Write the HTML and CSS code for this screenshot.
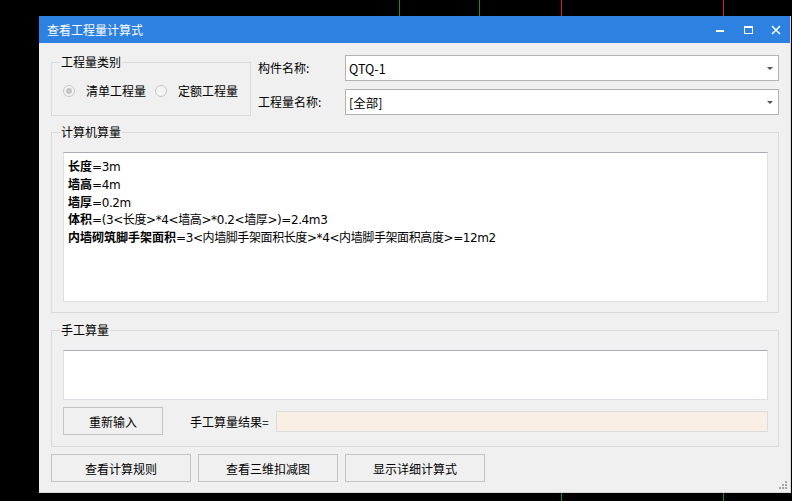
FILE: index.html
```html
<!DOCTYPE html>
<html lang="zh-CN">

<head>
    <meta charset="UTF-8">
    <meta name="viewport" content="width=device-width, initial-scale=1.0">
    <title>查看工程量计算式</title>
    <link rel="stylesheet" href="styles.css">
</head>

<body>
    <div class="desk-line green" style="left:399px; top:0; height:16px;"></div>
    <div class="desk-line green" style="left:479px; top:0; height:16px;"></div>
    <div class="desk-line red" style="left:561px; top:0; height:16px;"></div>
    <div class="desk-line red" style="left:723px; top:0; height:16px;"></div>
    <div class="desk-line green" style="left:561px; top:493px; height:8px;"></div>
    <div class="desk-line green" style="left:723px; top:493px; height:8px;"></div>

    <div class="window">
        <div class="titlebar">
            <span class="title">查看工程量计算式</span>
            <div class="title-buttons">
                <svg width="28" height="27" viewBox="0 0 28 27"><rect x="10" y="14" width="8" height="2" fill="#fff"/></svg>
                <svg width="28" height="27" viewBox="0 0 28 27"><rect x="10.5" y="10.5" width="8" height="7" fill="none" stroke="#fff"/><rect x="10" y="10" width="9" height="2" fill="#fff"/></svg>
                <svg width="28" height="27" viewBox="0 0 28 27"><path d="M10 10 L18 18 M18 10 L10 18" stroke="#fff" stroke-width="1.5"/></svg>
            </div>
        </div>

        <div class="content">
            <div class="top-row">
                <fieldset class="group kind-group">
                    <legend>工程量类别</legend>
                    <div class="radio-row">
                        <span class="radio checked"></span>
                        <span class="radio-label">清单工程量</span>
                        <span class="radio"></span>
                        <span class="radio-label">定额工程量</span>
                    </div>
                </fieldset>

                <div class="fields">
                    <label class="field-label">构件名称:</label>
                    <div class="combo"><span>QTQ-1</span><span class="arrow"></span></div>
                    <label class="field-label">工程量名称:</label>
                    <div class="combo"><span>[全部]</span><span class="arrow"></span></div>
                </div>
            </div>

            <fieldset class="group calc-group">
                <legend>计算机算量</legend>
                <div class="textbox formula">
                    <div class="line"><b>长度</b>=3m</div>
                    <div class="line"><b>墙高</b>=4m</div>
                    <div class="line"><b>墙厚</b>=0.2m</div>
                    <div class="line"><b>体积</b>=(3&lt;长度&gt;*4&lt;墙高&gt;*0.2&lt;墙厚&gt;)=2.4m3</div>
                    <div class="line"><b>内墙砌筑脚手架面积</b>=3&lt;内墙脚手架面积长度&gt;*4&lt;内墙脚手架面积高度&gt;=12m2</div>
                </div>
            </fieldset>

            <fieldset class="group manual-group">
                <legend>手工算量</legend>
                <div class="textbox manual-input"></div>
                <div class="manual-row">
                    <button class="btn reset-btn">重新输入</button>
                    <span class="result-label">手工算量结果=</span>
                    <div class="result-box"></div>
                </div>
            </fieldset>

            <div class="bottom-buttons">
                <button class="btn wide-btn">查看计算规则</button>
                <button class="btn wide-btn">查看三维扣减图</button>
                <button class="btn wide-btn">显示详细计算式</button>
            </div>
        </div>

        <svg class="grip" width="9" height="9" viewBox="0 0 9 9">
            <rect x="6" y="0" width="2" height="2" fill="#a5a5a5"/>
            <rect x="3" y="3" width="2" height="2" fill="#a5a5a5"/>
            <rect x="6" y="3" width="2" height="2" fill="#a5a5a5"/>
            <rect x="0" y="6" width="2" height="2" fill="#a5a5a5"/>
            <rect x="3" y="6" width="2" height="2" fill="#a5a5a5"/>
            <rect x="6" y="6" width="2" height="2" fill="#a5a5a5"/>
        </svg>
    </div>
</body>

</html>
```

FILE: styles.css
```css
:root {
    --face: #f0f0f0;
    --title-blue: #2d81e1;
    --group-line: #d9d9d9;
    --btn-line: #c4c4c4;
    --combo-line: #b2b2b2;
}

* {
    margin: 0;
    padding: 0;
    box-sizing: border-box;
    font-family: 'Noto Sans CJK SC', 'Microsoft YaHei', sans-serif;
}

html,
body {
    width: 792px;
    height: 501px;
    overflow: hidden;
}

body {
    background-color: #000;
    color: #000;
    font-size: 12px;
    position: relative;
}

.desk-line {
    position: absolute;
    width: 1px;
}

.desk-line.green {
    background-color: #1f8a1f;
}

.desk-line.red {
    background-color: #d42020;
}

.window {
    position: absolute;
    left: 39px;
    top: 16px;
    width: 752px;
    height: 477px;
    background-color: var(--face);
    border-right: 1px solid #d6d6d6;
    border-bottom: 1px solid #d6d6d6;
}

.titlebar {
    height: 27px;
    background-color: var(--title-blue);
    display: flex;
    align-items: center;
    justify-content: space-between;
    padding-left: 8px;
}

.title {
    color: #fff;
    font-size: 12px;
    line-height: 14px;
}

.title-buttons {
    display: flex;
    align-self: stretch;
}

.title-buttons svg {
    display: block;
}

.content {
    padding: 12px 11px 0 12px;
}

.top-row {
    display: flex;
    height: 61px;
}

.group {
    border: 1px solid var(--group-line);
    min-width: 0;
    margin: 0;
}

.group legend {
    font-size: 12px;
    line-height: 14px;
    padding: 0 1px;
    margin-left: -3px;
}

.kind-group {
    width: 200px;
    height: 61px;
    padding: 15px 0 0 11px;
}

.radio-row {
    display: flex;
    align-items: center;
    height: 14px;
}

.radio {
    width: 12px;
    height: 12px;
    border: 1px solid #c6c6c6;
    border-radius: 50%;
    background-color: #f4f4f4;
    margin-right: 11px;
    display: flex;
    align-items: center;
    justify-content: center;
}

.radio.checked::after {
    content: '';
    width: 6px;
    height: 6px;
    border-radius: 50%;
    background-color: #c4c4c4;
}

.radio-label {
    width: 60px;
    margin-right: 9px;
    line-height: 14px;
}

.fields {
    flex: 1;
    margin-left: 7px;
    display: grid;
    grid-template-columns: 87px 1fr;
    grid-template-rows: 26px 26px;
    row-gap: 8px;
    align-items: center;
}

.field-label {
    line-height: 14px;
}

.combo {
    height: 26px;
    background-color: #fff;
    border: 1px solid var(--combo-line);
    display: flex;
    align-items: center;
    justify-content: space-between;
    padding: 0 5px 0 3px;
    font-size: 12.5px;
}

.arrow {
    width: 0;
    height: 0;
    border-left: 3px solid transparent;
    border-right: 3px solid transparent;
    border-top: 3px solid #555;
}

.calc-group {
    margin-top: 9px;
    padding: 13px 10px 10px 11px;
}

.textbox {
    background-color: #fff;
    border: 1px solid #dcdfe6;
    border-top-color: #a9acb4;
}

.formula {
    height: 150px;
    padding: 5px 4px;
    font-size: 12px;
    line-height: 16.75px;
    white-space: nowrap;
}

.formula .line {
    font-family: 'DejaVu Sans', 'Noto Sans CJK SC', sans-serif;
    letter-spacing: -0.4px;
}

.formula b {
    font-family: 'Noto Sans CJK SC', sans-serif;
    font-weight: bold;
    letter-spacing: 0;
}

.manual-group {
    margin-top: 10px;
    padding: 13px 10px 11px 11px;
}

.manual-input {
    height: 50px;
}

.manual-row {
    margin-top: 7px;
    height: 28px;
    display: flex;
    align-items: center;
}

.btn {
    height: 28px;
    background-color: var(--face);
    border: 1px solid var(--btn-line);
    font-size: 12px;
    color: #000;
}

.reset-btn {
    width: 100px;
}

.result-label {
    margin-left: 27px;
    margin-right: 7px;
    white-space: nowrap;
}

.result-box {
    flex: 1;
    height: 21px;
    background-color: #faefe5;
    border: 1px solid #dcdcdc;
}

.bottom-buttons {
    margin-top: 7px;
    display: flex;
    gap: 7px;
}

.wide-btn {
    width: 140px;
}

.grip {
    position: absolute;
    right: 2px;
    bottom: 2px;
}
```
